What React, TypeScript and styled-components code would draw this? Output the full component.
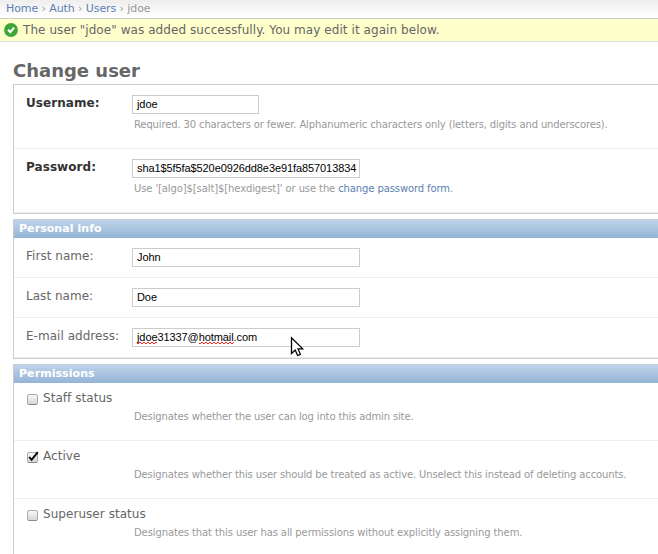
import React from "react";
import styled, { createGlobalStyle } from "styled-components";

const GlobalStyle = createGlobalStyle`
  * { box-sizing: border-box; }
  html, body { margin: 0; padding: 0; background: #fff; overflow: hidden; }
  body {
    font-family: "DejaVu Sans", Verdana, sans-serif;
    font-size: 12px;
    line-height: 14px;
    color: #666;
  }
`;

const Page = styled.div`
  position: relative;
  width: 658px;
  height: 554px;
  overflow: hidden;
`;

const Breadcrumbs = styled.nav`
  height: 19px;
  padding: 2px 0 0 6px;
  font-size: 11px;
  line-height: 14px;
  letter-spacing: -0.09px;
  color: #999;
  white-space: pre;
  border-bottom: 1px solid #ccc;
  background: linear-gradient(#eee, #fff);
`;

const Link = styled.a`
  color: #5b80b2;
  text-decoration: none;
`;

const Message = styled.div`
  display: flex;
  align-items: flex-start;
  height: 23px;
  padding: 4px 0 0 4px;
  gap: 5px;
  background: #ffffcc;
  border-bottom: 1px solid #ddd;
  letter-spacing: 0.065px;
  white-space: nowrap;
`;

const Content = styled.main`
  padding: 18px 0 0 13px;
`;

const Title = styled.h1`
  margin: 0;
  height: 24px;
  font-size: 18px;
  line-height: 22px;
  font-weight: bold;
  color: #666;
`;

const Module = styled.section`
  margin-bottom: 5px;
  border: 1px solid #ccc;
  border-right: 0;
`;

const ModuleTitle = styled.h2`
  margin: -1px 0 0;
  height: 19px;
  padding: 2px 0 0 5px;
  font-size: 11px;
  line-height: 14px;
  letter-spacing: 0.06px;
  font-weight: bold;
  color: #fff;
  border-top: 1px solid #c5cfda;
  background: linear-gradient(#bfd3ea, #94b4d6);
`;

const Row = styled.div<{ $height: number }>`
  display: flex;
  align-items: flex-start;
  height: ${(p) => p.$height}px;
  padding: 10px 0 0 12px;
  border-bottom: 1px solid #eee;
`;

const Label = styled.label<{ $required?: boolean }>`
  flex: none;
  width: 106px;
  padding-top: 1px;
  line-height: 15px;
  letter-spacing: ${(p) => (p.$required ? "0.06px" : "0.03px")};
  white-space: nowrap;
  font-weight: ${(p) => (p.$required ? "bold" : "normal")};
  color: ${(p) => (p.$required ? "#333" : "#666")};
`;

const Field = styled.div`
  display: flex;
  flex-direction: column;
`;

const TextBox = styled.div<{ $width: number }>`
  width: ${(p) => p.$width}px;
  height: 19px;
  padding: 2px 0 0 4px;
  border: 1px solid #ccc;
  background: #fff;
  color: #000;
  font-family: "Liberation Sans", Arial, sans-serif;
  font-size: 11px;
  line-height: 13px;
  letter-spacing: -0.09px;
  white-space: nowrap;
  overflow: hidden;
`;

const Misspelled = styled.span`
  padding-bottom: 1px;
  background:
    repeating-linear-gradient(90deg, #f22 0 2px, transparent 2px 4px) 0 100% / 100% 1px no-repeat,
    repeating-linear-gradient(90deg, transparent 0 2px, #f22 2px 4px) 0 calc(100% - 1px) / 100% 1px
      no-repeat;
`;

const Help = styled.p<{ $spacing?: number }>`
  margin: 4px 0 0 2px;
  font-size: 10px;
  line-height: 13px;
  letter-spacing: ${(p) => p.$spacing ?? -0.135}px;
  color: #999;
  white-space: nowrap;
`;

const CheckRow = styled.div`
  height: 58px;
  padding: 8px 0 0 12px;
  border-bottom: 1px solid #eee;

  ${Help} { margin: 4px 0 0 108px; }
`;

const CheckLabel = styled.label`
  display: flex;
  gap: 4px;
  height: 15px;
  line-height: 15px;
  letter-spacing: 0.05px;

  svg { margin-top: 2px; overflow: visible; }
`;

const Pointer = styled.svg`
  position: absolute;
  left: 290px;
  top: 336px;
`;

function CheckBox({ checked }: { checked?: boolean }) {
  return (
    <svg width="13" height="13" viewBox="0 0 13 13">
      <defs>
        <linearGradient id="box" x1="0" y1="0" x2="0" y2="1">
          <stop offset="0" stopColor="#fafafa" />
          <stop offset="1" stopColor="#d4d4d4" />
        </linearGradient>
      </defs>
      <rect x="1.5" y="1.5" width="10" height="10" rx="1.5" fill="url(#box)" stroke="#aaa" />
      <path d="M2.5 11.5h8" stroke="#888" />
      {checked && <path d="M3.2 6L5.6 8.8L11.8 1.2" fill="none" stroke="#000" strokeWidth="1.9" />}
    </svg>
  );
}

const permissions = [
  { name: "Staff status", help: "Designates whether the user can log into this admin site." },
  {
    name: "Active",
    checked: true,
    help: "Designates whether this user should be treated as active. Unselect this instead of deleting accounts.",
  },
  {
    name: "Superuser status",
    spacing: -0.1,
    help: "Designates that this user has all permissions without explicitly assigning them.",
  },
];

export default function App() {
  return (
    <Page>
      <GlobalStyle />
      <Breadcrumbs>
        <Link>Home</Link> › <Link>Auth</Link> › <Link>Users</Link> › jdoe
      </Breadcrumbs>
      <Message>
        <svg width="14" height="14" viewBox="0 0 14 14">
          <circle cx="7" cy="7" r="6.9" fill="#3fa535" />
          <path d="M4 6.8L6.3 9.2L10.1 4.6" fill="none" stroke="#fff" strokeWidth="2.1" />
        </svg>
        <span>The user "jdoe" was added successfully. You may edit it again below.</span>
      </Message>
      <Content>
        <Title>Change user</Title>
        <Module>
          <Row $height={64}>
            <Label $required>Username:</Label>
            <Field>
              <TextBox $width={127}>jdoe</TextBox>
              <Help>
                Required. 30 characters or fewer. Alphanumeric characters only (letters, digits and
                underscores).
              </Help>
            </Field>
          </Row>
          <Row $height={64}>
            <Label $required>Password:</Label>
            <Field>
              <TextBox $width={228}>sha1$5f5fa$520e0926dd8e3e91fa857013834</TextBox>
              <Help $spacing={-0.11}>
                Use '[algo]$[salt]$[hexdigest]' or use the <Link>change password form</Link>.
              </Help>
            </Field>
          </Row>
        </Module>
        <Module>
          <ModuleTitle>Personal info</ModuleTitle>
          <Row $height={40}>
            <Label>First name:</Label>
            <TextBox $width={228}>John</TextBox>
          </Row>
          <Row $height={40}>
            <Label>Last name:</Label>
            <TextBox $width={228}>Doe</TextBox>
          </Row>
          <Row $height={40}>
            <Label>E-mail address:</Label>
            <TextBox $width={228}>
              <Misspelled>jdoe</Misspelled>31337@<Misspelled>hotmail</Misspelled>.com
            </TextBox>
          </Row>
        </Module>
        <Module>
          <ModuleTitle>Permissions</ModuleTitle>
          {permissions.map((p) => (
            <CheckRow key={p.name}>
              <CheckLabel>
                <CheckBox checked={p.checked} />
                {p.name}
              </CheckLabel>
              <Help $spacing={p.spacing}>{p.help}</Help>
            </CheckRow>
          ))}
        </Module>
      </Content>
      <Pointer width="14" height="22" viewBox="0 0 14 22">
        <path
          d="M1.5 1.8V17.5L5.2 14L7.6 19.5L10.4 18.3L8 12.9H12.8Z"
          fill="#fff"
          stroke="#000"
          strokeWidth="1.3"
        />
      </Pointer>
    </Page>
  );
}
